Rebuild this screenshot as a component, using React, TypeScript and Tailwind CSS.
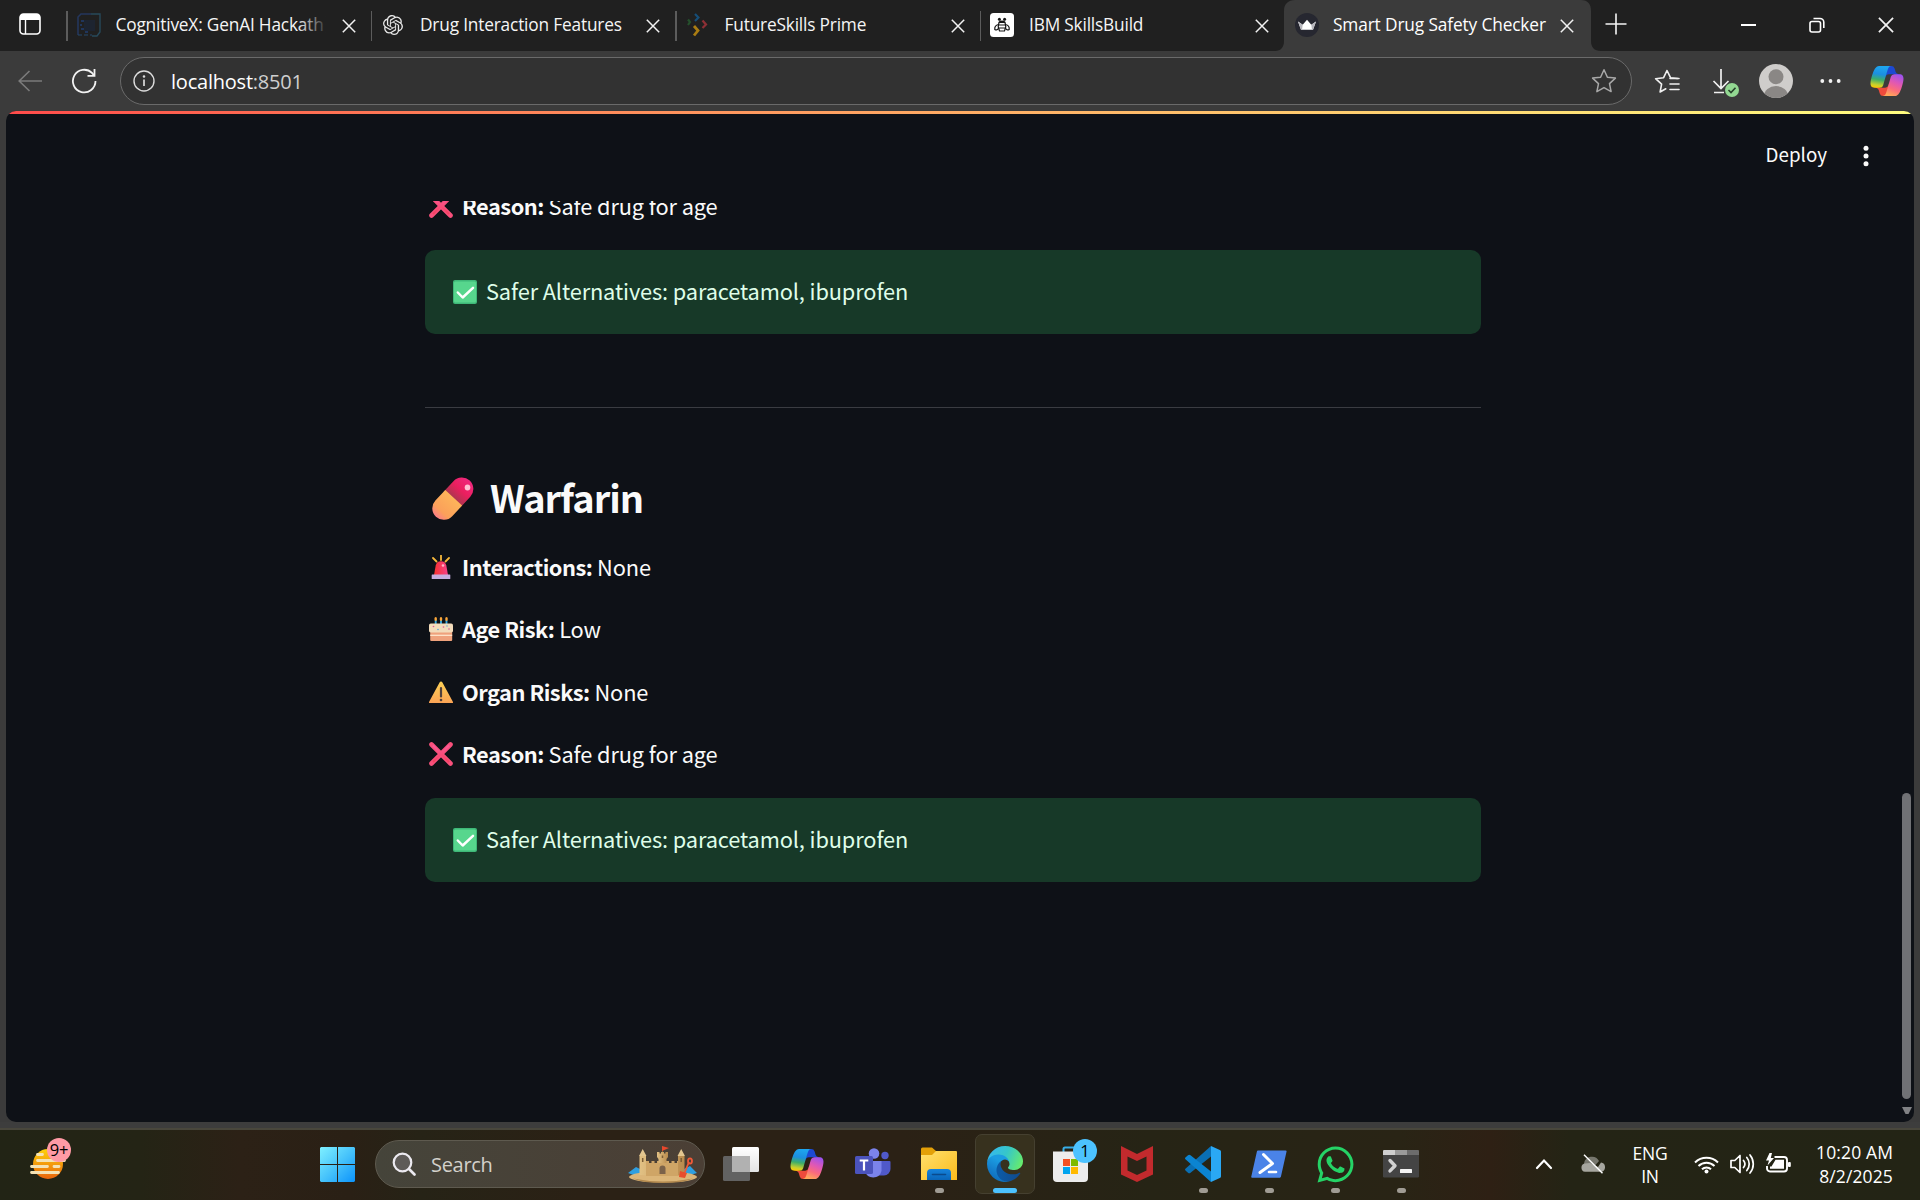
import type { ReactNode } from "react";
import { SiOpenai } from "react-icons/si";
import { FaWhatsapp } from "react-icons/fa";

const UI = "font-['Open_Sans','Noto_Sans',sans-serif]";
const BODY = "font-['Noto_Sans_CJK_SC','Noto_Sans',sans-serif]";

/* ---------- shared glyphs ---------- */

function Cross({ size, className = "" }: { size: number; className?: string }) {
  return (
    <svg width={size} height={size} viewBox="0 0 14 14" className={className} fill="none" stroke="#f2f2f2" strokeWidth="1.5">
      <path d="M.8.8l12.4 12.4M13.2.8L.8 13.2" />
    </svg>
  );
}

function CopilotLogo({ id }: { id: string }) {
  return (
    <svg width="36" height="36" viewBox="0 0 48 48" className="shrink-0">
      <defs>
        <linearGradient id={id + "a"} x1="0.3" y1="0" x2="0.15" y2="1">
          <stop offset="0" stopColor="#1ea5ef" />
          <stop offset=".35" stopColor="#1c8fe0" />
          <stop offset=".6" stopColor="#3cad6a" />
          <stop offset=".85" stopColor="#c9d02c" />
          <stop offset="1" stopColor="#ffc800" />
        </linearGradient>
        <linearGradient id={id + "b"} x1=".8" y1="0" x2=".4" y2="1">
          <stop offset="0" stopColor="#9b52f0" />
          <stop offset=".4" stopColor="#e058b4" />
          <stop offset=".7" stopColor="#fb6c7c" />
          <stop offset="1" stopColor="#ffa65a" />
        </linearGradient>
      </defs>
      <path d="M34.14 7.33A4.63 4.63 0 0 0 29.7 4h-1.35a4.63 4.63 0 0 0-4.56 3.79L21.48 20.4l.57-1.96a4.63 4.63 0 0 1 4.44-3.33h7.86l3.3 1.28 3.17-1.28h-.93a4.63 4.63 0 0 1-4.44-3.33l-1.3-4.45z" fill="#1d49d3" />
      <path d="M14.33 40.66A4.63 4.63 0 0 0 18.78 44h2.87c2.51 0 4.56-2 4.63-4.51l.31-12.16-.65 2.23a4.63 4.63 0 0 1-4.44 3.33h-7.93l-2.82-1.53-3.06 1.53h.91c2.06 0 3.88 1.36 4.45 3.34l1.28 4.43z" fill="#ee4b3c" />
      <path d="M29.5 4H13.46c-4.58 0-7.33 6.06-9.17 12.11C2.12 23.29-.72 32.89 7.5 32.89h6.93a4.65 4.65 0 0 0 4.47-3.36c1.38-4.81 3.79-13.2 5.69-19.6C25.5 6.7 27 4 29.5 4z" fill={`url(#${id}a)`} />
      <path d="M18.5 44h16.04c4.58 0 7.33-6.06 9.17-12.12 2.17-7.18 5.01-16.78-3.21-16.78h-6.93a4.65 4.65 0 0 0-4.47 3.36c-1.38 4.82-3.79 13.21-5.68 19.61C22.5 41.3 21 44 18.5 44z" fill={`url(#${id}b)`} />
    </svg>
  );
}

/* ---------- tab strip ---------- */

function CircuitIcon() {
  return (
    <svg width="24" height="24" viewBox="0 0 24 24" fill="none">
      <path d="M1 22V4l3-3h10" stroke="#24365c" strokeWidth="1.6" />
      <path d="M14 1h9v18l-3 4h-5" stroke="#27495a" strokeWidth="1.4" />
      <path d="M1 22h14" stroke="#24486c" strokeWidth="1.2" strokeDasharray="4 2" />
      <path d="M4 8h3M3 12h2M9 10h2M4 16h3M8 19h3" stroke="#20365c" strokeWidth="1.8" />
      <rect x="7" y="7" width="11" height="11" fill="#1d2430" />
    </svg>
  );
}

function ChevronsIcon() {
  return (
    <svg width="21" height="24" viewBox="0 0 21 24" fill="none" strokeWidth="2.2">
      <path d="M1 6.5l2 2.5-2 3" stroke="#25502c" />
      <path d="M8 1l3.4 3.6L8 8" stroke="#164e78" />
      <path d="M15.5 7.500l3.500 4-3.500 3.500" stroke="#8e2f35" />
      <path d="M7 13l4 4.500-4 5" stroke="#a97c12" strokeWidth="2.800" />
    </svg>
  );
}

function BeeIcon() {
  return (
    <svg width="24" height="24" viewBox="0 0 24 24">
      <rect width="24" height="24" rx="3.500" fill="#fff" />
      <g fill="none" stroke="#161616" strokeWidth="1.200">
        <path d="M9 9.300h6l.8 4.500L14.500 18h-5l-1.300-4.200zM8.500 12h7M8.600 15h7" />
        <path d="M8.500 11.500C6 12 4.500 14 4.800 16.500c1.500 1 3.200.3 3.700-1.500M15.500 11.500c2.500.5 4 2.500 3.700 5-1.500 1-3.200.3-3.700-1.500" />
      </g>
      <circle cx="9.400" cy="6.300" r="1.500" fill="#161616" />
      <circle cx="14.600" cy="6.300" r="1.500" fill="#161616" />
      <rect x="9.200" y="7.600" width="5.600" height="2" fill="#161616" />
    </svg>
  );
}

function CrownIcon() {
  return (
    <svg width="24" height="24" viewBox="0 0 24 24">
      <circle cx="12" cy="12" r="12" fill="#262730" />
      <path d="M3 8.500l4.700 3.200L12 6.800l4.300 4.900L21 8.500l-3 8.300H6z" fill="#fff" />
      <path d="M3 8.500l4.700 3.200L7 16.800H6zM21 8.500l-4.700 3.200.7 5.100h1z" fill="#b6b6bc" />
    </svg>
  );
}

function Tab({ icon, title, fade }: { icon: ReactNode; title: string; fade?: boolean }) {
  return (
    <div className="flex h-[51px] w-[304.5px] shrink-0 items-center">
      <div className="h-[30px] w-[1.500px] shrink-0 bg-[#5c5c5c]" />
      <div className="ml-[9px] flex w-6 shrink-0 justify-center pb-[2px]">{icon}</div>
      <div className="relative ml-[15px] h-6 w-[213px] shrink-0 overflow-hidden pb-[3px] text-[17.300px] leading-[21px] tracking-[-0.18px] whitespace-nowrap text-[#f5f5f5]">
        {title}
        {fade && <div className="absolute inset-y-0 right-0 w-8 bg-linear-to-r from-transparent to-[#202020]" />}
      </div>
      <Cross size={14} className="ml-[13px] mt-px" />
    </div>
  );
}

function TabStrip() {
  return (
    <div className="flex h-[51px] items-center overflow-hidden bg-[#202020]">
      <svg width="22" height="22" viewBox="0 0 22 22" className="-mt-[3px] ml-[19px] mr-[25px] shrink-0" fill="none">
        <rect x="1" y="1" width="20" height="20" rx="3.500" stroke="#fff" strokeWidth="1.600" />
        <path d="M1 4.500a3.500 3.500 0 0 1 3.500-3.500h13A3.500 3.500 0 0 1 21 4.500V7H1z" fill="#fff" />
        <path d="M6.500 6v15" stroke="#fff" strokeWidth="1.400" />
      </svg>
      <Tab icon={<CircuitIcon />} title="CognitiveX: GenAI Hackath" fade />
      <Tab icon={<SiOpenai size={20} color="#e8e8e8" />} title="Drug Interaction Features" />
      <Tab icon={<ChevronsIcon />} title="FutureSkills Prime" />
      <Tab icon={<BeeIcon />} title="IBM SkillsBuild" />
      <svg width="326" height="51" viewBox="0 0 326 51" className="-ml-[9px] -mr-[326px] shrink-0">
        <path d="M0 51c6 0 9-4 9-10V11C9 4 13 0 20 0h286c7 0 10 4 10 11v30c0 6 3 10 10 10z" fill="#3b3b3b" />
      </svg>
      <div className="relative ml-[9px] flex h-[51px] w-[307px] shrink-0 items-center pl-[11px]">
        <div className="pb-[2px]">
          <CrownIcon />
        </div>
        <div className="ml-[14px] w-[216px] pb-[3px] text-[17.300px] leading-[21px] tracking-[-0.13px] whitespace-nowrap text-white">Smart Drug Safety Checker</div>
        <Cross size={14} className="ml-[11px] mt-px" />
      </div>
      <svg width="22" height="22" viewBox="0 0 22 22" className="-mt-[4px] ml-[14px] shrink-0" stroke="#f5f5f5" strokeWidth="1.600">
        <path d="M11 .5v21M.5 11h21" />
      </svg>
      <div className="mr-[26px] ml-auto flex items-center pb-px">
        <div className="h-[2px] w-[15px] bg-white" />
        <svg width="16" height="16" viewBox="0 0 16 16" className="ml-[53px]" fill="none" stroke="#fff" strokeWidth="1.600">
          <rect x="1" y="4.500" width="10.500" height="10.500" rx="2" />
          <path d="M4.500 1.500H11A3.800 3.800 0 0 1 14.800 5.300V11" />
        </svg>
        <Cross size={16} className="ml-[53px]" />
      </div>
    </div>
  );
}

/* ---------- toolbar ---------- */

function Toolbar() {
  return (
    <div className="flex h-[60px] items-center bg-[#3b3b3b]">
      <svg width="24" height="22" viewBox="0 0 24 22" className="ml-[18px] shrink-0" fill="none" stroke="#7b7b7b" strokeWidth="1.600">
        <path d="M24 11H1.200M11.500 1L1.200 11l10.300 10" />
      </svg>
      <svg width="26" height="26" viewBox="0 0 26 26" className="ml-[29px] shrink-0" fill="none" stroke="#f2f2f2" strokeWidth="1.800">
        <path d="M24.500 13A11.300 11.300 0 1 1 21 4.900L23 7.300" />
        <path d="M23.500 1v6.800h-7" />
      </svg>
      <div className="ml-[23px] flex h-12 w-[1512px] shrink-0 items-center rounded-full border-[1.500px] border-[#6a6a6a] bg-[#323232]">
        <svg width="22" height="22" viewBox="0 0 22 22" className="ml-[12px] shrink-0" fill="none" stroke="#dcdcdc" strokeWidth="1.400">
          <circle cx="11" cy="11" r="10" />
          <path d="M11 9.500v6.500" strokeWidth="1.700" />
          <circle cx="11" cy="6.500" r=".6" fill="#dcdcdc" />
        </svg>
        <div className="mt-px ml-[16px] text-[20px] leading-7 tracking-[-0.22px] text-white">
          localhost<span className="text-[#cfcfcf]">:8501</span>
        </div>
        <svg width="26" height="26" viewBox="0 0 26 26" className="ml-auto mr-[14px]" fill="none" stroke="#a8a8a8" strokeWidth="1.500" strokeLinejoin="round">
          <path d="M13 1.800l3.400 7.400 8 .9-5.900 5.500 1.600 8L13 19.600l-7.100 4 1.600-8L1.600 10.100l8-.9z" />
        </svg>
      </div>
      <svg width="27" height="25" viewBox="0 0 27 25" className="ml-[22px] shrink-0" fill="none" stroke="#f0f0f0" strokeWidth="1.600" strokeLinejoin="round" strokeLinecap="round">
        <path d="M23.500 9.500l-7-.8L13 1.500 9.600 8.700l-8 1 6 5.500-1.500 7.800 5.700-3.200" />
        <path d="M16 9.500h9M16 15h9M16 20.500h9" />
      </svg>
      <svg width="28" height="30" viewBox="0 0 28 30" className="ml-[31px] mt-[1px] shrink-0" fill="none" stroke="#f0f0f0" strokeWidth="1.700">
        <path d="M9 2v19M1.500 14L9 21.500 16.500 14M2 25.500h10" />
        <circle cx="20" cy="23" r="7" fill="#93d892" stroke="none" />
        <path d="M16.500 23l2.500 2.500 4.500-4.800" stroke="#26402a" strokeWidth="1.600" />
      </svg>
      <svg width="34" height="34" viewBox="0 0 34 34" className="ml-[19px] shrink-0">
        <clipPath id="avatar">
          <circle cx="17" cy="17" r="17" />
        </clipPath>
        <g clipPath="url(#avatar)">
          <rect width="34" height="34" fill="#cfcdcb" />
          <circle cx="17" cy="12.700" r="7.500" fill="#8a8785" />
          <ellipse cx="17" cy="32" rx="12" ry="10" fill="#8a8785" />
        </g>
      </svg>
      <svg width="21" height="6" viewBox="0 0 21 6" className="ml-[27px] shrink-0" fill="#f2f2f2">
        <circle cx="2.300" cy="3" r="1.900" />
        <circle cx="10.500" cy="3" r="1.900" />
        <circle cx="18.700" cy="3" r="1.900" />
      </svg>
      <div className="ml-[28px]">
        <CopilotLogo id="top" />
      </div>
    </div>
  );
}

/* ---------- page content ---------- */

function CrossEmoji() {
  return (
    <svg width="24" height="24" viewBox="0 0 24 24">
      <defs>
        <linearGradient id="cross" x1="0" y1="0" x2="0" y2="1">
          <stop offset="0" stopColor="#fb5a9a" />
          <stop offset="1" stopColor="#f5405e" />
        </linearGradient>
      </defs>
      <path d="M2.500 2.500L12 12l9.500-9.500M2.500 21.500L12 12l9.500 9.500" fill="none" stroke="#f9507c" strokeWidth="4.600" strokeLinecap="round" />
      <path d="M4 3.500l16 16.500M20 3.500L4 20" stroke="url(#cross)" strokeWidth="2" />
    </svg>
  );
}

function CheckEmoji() {
  return (
    <svg width="24" height="24" viewBox="0 0 24 24">
      <rect width="24" height="24" rx="2" fill="#3fb878" />
      <rect x="1" y="1.500" width="22" height="21" rx="1.500" fill="#57d68d" />
      <path d="M4.800 12.500l4.900 5L20 7.800" fill="none" stroke="#fff" strokeWidth="2.500" strokeLinecap="round" strokeLinejoin="round" />
    </svg>
  );
}

function SirenEmoji() {
  return (
    <svg width="24" height="24" viewBox="0 0 24 24">
      <defs>
        <linearGradient id="siren">
          <stop offset="0" stopColor="#f8312f" />
          <stop offset="1" stopColor="#f5418a" />
        </linearGradient>
      </defs>
      <path d="M12 .5v4.500M4 3l3.500 3.500M20 3l-3.500 3.500" stroke="#f6b83c" strokeWidth="1.800" strokeLinecap="round" />
      <path d="M5 20l1.700-9.500a5.400 5.400 0 0 1 10.600 0L19 20z" fill="url(#siren)" />
      <circle cx="14" cy="10.500" r="1.300" fill="#ffb6c6" />
      <rect x="2.700" y="19.500" width="18.600" height="4.500" rx=".6" fill="#c5aee0" />
    </svg>
  );
}

function CakeEmoji() {
  return (
    <svg width="24" height="24" viewBox="0 0 24 24">
      <path d="M6.700 3v5M12 3v5M17.500 3v5" stroke="#3aa9e0" strokeWidth="1.900" />
      <g fill="#f9a63a">
        <ellipse cx="6.700" cy="2" rx="1.300" ry="2" />
        <ellipse cx="12" cy="2" rx="1.300" ry="2" />
        <ellipse cx="17.500" cy="2" rx="1.300" ry="2" />
      </g>
      <rect x="1.200" y="12" width="22" height="12" rx="1" fill="#efa27c" />
      <rect y="6.500" width="24" height="9" rx="1.800" fill="#f3dcbb" />
      <path d="M1.200 18.300h22" stroke="#ffe9d0" strokeWidth="1.200" />
      <g fill="#e0579a">
        <circle cx="4.500" cy="9.500" r=".8" />
        <circle cx="14.500" cy="10" r=".8" />
        <circle cx="20" cy="12" r=".8" />
      </g>
      <g fill="#5aa6dd">
        <circle cx="9" cy="12.500" r=".8" />
        <circle cx="18" cy="9" r=".7" />
      </g>
    </svg>
  );
}

function WarningEmoji() {
  return (
    <svg width="24" height="24" viewBox="0 0 24 24">
      <defs>
        <linearGradient id="warn" x1="0" y1="0" x2="0" y2="1">
          <stop offset="0" stopColor="#fcd155" />
          <stop offset="1" stopColor="#fba355" />
        </linearGradient>
      </defs>
      <path d="M10.700 2.200a1.500 1.500 0 0 1 2.600 0L24 22a.8.800 0 0 1-.8 1H.8A.8.800 0 0 1 0 22z" fill="url(#warn)" />
      <path d="M12 8v8.500" stroke="#50403c" strokeWidth="2.200" strokeLinecap="round" />
      <circle cx="12" cy="20" r="1.300" fill="#50403c" />
    </svg>
  );
}

function PillEmoji() {
  return (
    <svg width="42" height="43" viewBox="0 0 42 43" className="shrink-0">
      <defs>
        <linearGradient id="pillTop" x1="0" y1="0" x2="1" y2="0">
          <stop offset="0" stopColor="#a03a4c" />
          <stop offset=".5" stopColor="#ea1f5e" />
          <stop offset="1" stopColor="#f0287e" />
        </linearGradient>
        <linearGradient id="pillBottom" x1="1" y1="0" x2="0" y2="0">
          <stop offset="0" stopColor="#fdb45a" />
          <stop offset=".7" stopColor="#fba05a" />
          <stop offset="1" stopColor="#fb7f86" />
        </linearGradient>
      </defs>
      <g transform="rotate(-47 21 21.500)">
        <path d="M21 10h14.500a11.500 11.500 0 0 1 0 23H21z" fill="url(#pillTop)" transform="translate(-1.500 0)" />
        <path d="M21 10H6.500a11.500 11.500 0 0 0 0 23H21z" fill="url(#pillBottom)" transform="translate(1 0)" />
      </g>
      <ellipse cx="35.500" cy="10.500" rx="2.800" ry="3" fill="#ffc2d4" />
    </svg>
  );
}

function Fact({ icon, label, value }: { icon: ReactNode; label: string; value: string }) {
  return (
    <div className="flex h-[38.500px] items-center">
      <div className="ml-1 mt-[2px] w-[33px] shrink-0">{icon}</div>
      <p className="pt-[2px] text-[21.800px] leading-[36px] tracking-[-0.13px] whitespace-nowrap text-[#fafafa]">
        <strong className="font-bold tracking-[-0.5px]">{label}</strong> {value}
      </p>
    </div>
  );
}

function Alternatives() {
  return (
    <div className="flex h-[84px] items-center rounded-[10px] bg-[#173928] pl-7">
      <div className="pb-px">
        <CheckEmoji />
      </div>
      <p className="ml-[9px] pb-[2px] text-[21.800px] leading-[36px] tracking-[-0.13px] text-[#dffde9]">Safer Alternatives: paracetamol, ibuprofen</p>
    </div>
  );
}

function Page() {
  return (
    <div className={`mx-[6px] flex h-[1011px] flex-col overflow-hidden rounded-[10px] bg-[#0e1117] ${BODY}`}>
      <div className="h-[3px] shrink-0 bg-linear-to-r from-[#ff4b4b] to-[#fffd80]" />
      <div className="flex h-[87px] shrink-0 items-center justify-end pr-[45px] pb-[5px]">
        <div className="pb-[2px] text-[18.800px] leading-7 text-[#fafafa]">Deploy</div>
        <svg width="6" height="22" viewBox="0 0 6 22" className="ml-[36px] mt-[1px]" fill="#fafafa">
          <circle cx="3" cy="3.300" r="2.500" />
          <circle cx="3" cy="11" r="2.500" />
          <circle cx="3" cy="18.700" r="2.500" />
        </svg>
      </div>
      <div className="flex min-h-0 flex-1 overflow-hidden">
        <div className="-mt-[15px] ml-[419px] w-[1056px] shrink-0">
          <Fact icon={<CrossEmoji />} label="Reason:" value="Safe drug for age" />
          <div className="mt-[25.500px]">
            <Alternatives />
          </div>
          <div className="mt-[73px] h-px bg-[#3a3c42]" />
          <div className="mt-[64px] flex h-[52px] items-center pl-[7px]">
            <PillEmoji />
            <h2 className="ml-[16px] pb-[2px] text-[38px] leading-[50px] font-bold tracking-[-1.050px] text-[#fafafa]">Warfarin</h2>
          </div>
          <div className="mt-[22.500px] flex flex-col gap-[24px]">
            <Fact icon={<SirenEmoji />} label="Interactions:" value="None" />
            <Fact icon={<CakeEmoji />} label="Age Risk:" value="Low" />
            <Fact icon={<WarningEmoji />} label="Organ Risks:" value="None" />
            <Fact icon={<CrossEmoji />} label="Reason:" value="Safe drug for age" />
          </div>
          <div className="mt-[25.500px]">
            <Alternatives />
          </div>
        </div>
        <div className="ml-auto mr-[3px] flex w-[9px] flex-col items-center justify-end pb-[8px]">
          <div className="h-[306px] w-[9px] rounded-full bg-[#707175]" />
          <svg width="10" height="7" viewBox="0 0 10 7" className="mt-[8px]" fill="#808184">
            <path d="M0 0h10L6.500 7h-3z" />
          </svg>
        </div>
      </div>
    </div>
  );
}

/* ---------- taskbar ---------- */

function WeatherIcon() {
  return (
    <div className="relative ml-[30px] h-9 w-[42px]">
      <svg width="42" height="36" viewBox="0 0 42 36">
        <defs>
          <linearGradient id="sun" x1="0" y1="0" x2="0" y2="1">
            <stop offset="0" stopColor="#ffd20a" />
            <stop offset="1" stopColor="#e8640c" />
          </linearGradient>
        </defs>
        <circle cx="18" cy="17" r="15" fill="url(#sun)" />
        <g stroke="#f4e2b4" strokeWidth="2.800" strokeLinecap="round">
          <path d="M7.500 7.500h5M7.500 13.500h27M1.500 19.500h16M24 19.500h5M1.500 25.500h27" />
        </g>
      </svg>
      <div className="absolute -top-[9px] left-[17px] flex size-6 items-center justify-center rounded-full bg-[#ff9aa5] text-[16.500px] tracking-[-0.3px] text-black">9+</div>
    </div>
  );
}

function WindowsIcon() {
  return (
    <svg width="35" height="35" viewBox="0 0 35 35" className="-mt-px shrink-0">
      <defs>
        <linearGradient id="win" gradientUnits="userSpaceOnUse" x1="0" y1="0" x2="35" y2="35">
          <stop offset="0" stopColor="#7ff0ff" />
          <stop offset=".5" stopColor="#48c4fb" />
          <stop offset="1" stopColor="#0c93fb" />
        </linearGradient>
      </defs>
      <path d="M1 0h16v17H0V1zM18 0h16l1 1v16H18zM0 18h17v17H1l-1-1zM18 18h17v16l-1 1H18z" fill="url(#win)" />
    </svg>
  );
}

function Castle() {
  return (
    <svg width="70" height="37" viewBox="0 0 70 37" className="shrink-0">
      <defs>
        <linearGradient id="sand">
          <stop offset="0" stopColor="#e2c184" />
          <stop offset="1" stopColor="#b98b4d" />
        </linearGradient>
      </defs>
      <path d="M0 27l8-6 8 4 40-2 6-3 7 7-10 3H8z" fill="#2f9fe0" />
      <ellipse cx="35" cy="31" rx="34" ry="5.500" fill="#dcb679" />
      <path d="M5 32.500q30 6 60 0-10 4.500-30 4.500T5 32.500z" fill="#b3894e" />
      <path d="M18 15h3v2h2.500v-2h3v2H29v-2h3v2h6v-2h3v2h2.500v-2h3v2H49v-2h3v15H18z" fill="#cfa566" />
      <path d="M11.500 10h6.500v19h-6.500zM50 10h6.500v19H50z" fill="url(#sand)" />
      <path d="M11 10l3.700-7L18.500 10zM49.500 10l3.700-7L57 10z" fill="#e3c68f" />
      <path d="M29 6h2.500v1.500H33V6h3v1.500h1.500V6H40v5l-1.500 2v4h-8v-4L29 11z" fill="url(#sand)" />
      <path d="M34.500 6V.5" stroke="#8d6b3a" />
      <path d="M34 0l7 2-7 3z" fill="#e8472c" />
      <path d="M31.500 28v-5.500a3 3 0 0 1 6 0V28z" fill="#7b6249" />
      <path d="M14.700 12v4M53.200 12v4M34.500 9.500v2.500" stroke="#7b5d36" strokeWidth="1.500" />
      <path d="M61 16l-5 12" stroke="#ef5a38" strokeWidth="1.800" />
      <ellipse cx="62" cy="15" rx="2" ry="2.700" fill="none" stroke="#ef5a38" strokeWidth="1.800" />
      <path d="M52 25l7 2-2 5-6-1z" fill="#e84d2d" />
    </svg>
  );
}

function SearchBox() {
  return (
    <div className="-mt-[2px] ml-[20px] flex h-12 w-[330px] shrink-0 items-center rounded-full border border-[#5e5a4f] bg-linear-to-r from-[#45443a] to-[#4b3f35]">
      <svg width="24" height="24" viewBox="0 0 24 24" className="ml-[16px]" fill="none" stroke="#eceaf0" strokeLinecap="round">
        <circle cx="10.500" cy="10.500" r="8.800" strokeWidth="2.200" fill="#5e5b58" />
        <path d="M17 17l5.500 5.500" strokeWidth="2.600" />
      </svg>
      <div className="mt-px ml-[15px] text-[20px] leading-7 tracking-[-0.3px] text-[#d3d1cb]">Search</div>
      <div className="ml-auto mr-[6px]">
        <Castle />
      </div>
    </div>
  );
}

function TaskViewIcon() {
  return (
    <svg width="36" height="34" viewBox="0 0 36 34">
      <defs>
        <linearGradient id="tv" x1="0" y1="0" x2="0" y2="1">
          <stop offset="0" stopColor="#fff" />
          <stop offset="1" stopColor="#e4e4e4" />
        </linearGradient>
      </defs>
      <rect y="9" width="27" height="25" rx="1.500" fill="#626262" />
      <rect x="9" width="27" height="25" rx="1.500" fill="url(#tv)" />
      <path d="M9 9h18v16H10.500A1.500 1.500 0 0 1 9 23.500z" fill="#b1b1b1" />
    </svg>
  );
}

function TeamsIcon() {
  return (
    <svg width="36" height="34" viewBox="0 0 36 34">
      <circle cx="30" cy="8.500" r="3.700" fill="#5059c9" />
      <path d="M24 14h10.500a1 1 0 0 1 1 1v7a6.500 6.500 0 0 1-6.500 6.500H24z" fill="#5059c9" />
      <circle cx="19" cy="6.500" r="5.300" fill="#7b83eb" />
      <path d="M10 14h16.500v10a8.500 8.500 0 0 1-16.500 0z" fill="#7b83eb" />
      <rect y="9" width="18" height="18" rx="1.600" fill="#4b53bc" />
      <path d="M4.700 13.500h8.600M9 13.500v10" stroke="#fff" strokeWidth="2.200" />
    </svg>
  );
}

function ExplorerIcon() {
  return (
    <svg width="36" height="34" viewBox="0 0 36 34">
      <defs>
        <linearGradient id="fold" x1="0" y1="0" x2="1" y2="1">
          <stop offset="0" stopColor="#ffe06e" />
          <stop offset="1" stopColor="#fcbb1b" />
        </linearGradient>
        <linearGradient id="tray" x1="0" y1="0" x2="0" y2="1">
          <stop offset="0" stopColor="#1683dc" />
          <stop offset="1" stopColor="#0a65b8" />
        </linearGradient>
      </defs>
      <path d="M0 2a1.500 1.500 0 0 1 1.500-1.500h9.500L15 4v6H0z" fill="#e3a008" />
      <path d="M0 8h11l4-4h20a1 1 0 0 1 1 1v28H0z" fill="url(#fold)" />
      <path d="M6 33v-7a4 4 0 0 1 4-4h16a4 4 0 0 1 4 4v7z" fill="url(#tray)" />
      <path d="M11.500 27.500h13" stroke="#0a4a8c" strokeWidth="1.600" strokeLinecap="round" />
    </svg>
  );
}

function EdgeIcon() {
  return (
    <svg width="36" height="36" viewBox="0 0 256 256">
      <defs>
        <linearGradient id="edgeA" x1=".2" y1=".5" x2="1" y2=".5">
          <stop offset="0" stopColor="#0c59a4" />
          <stop offset="1" stopColor="#114a8b" />
        </linearGradient>
        <linearGradient id="edgeB" x1=".6" y1=".3" x2=".3" y2="1">
          <stop offset="0" stopColor="#1b9de2" />
          <stop offset=".5" stopColor="#1580cd" />
          <stop offset="1" stopColor="#0d6ab8" />
        </linearGradient>
        <linearGradient id="edgeC" x1="0" y1=".3" x2="1" y2=".6">
          <stop offset="0" stopColor="#35b8f1" />
          <stop offset=".5" stopColor="#36c6c9" />
          <stop offset="1" stopColor="#66eb6e" />
        </linearGradient>
      </defs>
      <path d="M231.070 190.540a79.200 79.200 0 0 1-10.540 4.710 101.850 101.850 0 0 1-35.900 6.460c-47.320 0-88.540-32.550-88.540-74.320A31.480 31.480 0 0 1 112.500 99.800c-42.800 1.800-53.800 46.400-53.800 72.530 0 73.880 68.090 81.370 82.760 81.370 7.910 0 19.840-2.300 27-4.560l1.310-.44a128.340 128.340 0 0 0 66.600-52.800 4 4 0 0 0-5.300-5.360z" fill="url(#edgeA)" />
      <path d="M105.730 241.420a79.200 79.200 0 0 1-22.740-21.340 80.720 80.720 0 0 1 29.530-120.220c3.120-1.470 8.450-4.130 15.540-4a32.350 32.350 0 0 1 25.690 13 31.880 31.880 0 0 1 6.360 18.660c0-.21 24.460-79.600-80-79.600-43.900 0-80 41.660-80 78.210a130.150 130.150 0 0 0 12.110 56 128 128 0 0 0 156.380 67.110 75.550 75.550 0 0 1-62.780-8z" fill="url(#edgeB)" />
      <path d="M152.330 148.860c-.81 1.050-3.300 2.500-3.300 5.660 0 2.610 1.700 5.120 4.720 7.230 14.380 10 41.490 8.680 41.560 8.680a59.560 59.560 0 0 0 30.270-8.350 61.380 61.380 0 0 0 30.430-52.880c.26-22.410-8-37.310-11.340-43.910C223.460 23.840 177.720 0 128 0A128 128 0 0 0 0 126.200c.48-36.540 36.800-66.050 80-66.050 3.500 0 23.460.34 42 10.070 16.340 8.580 24.900 18.940 30.850 29.210 6.180 10.670 7.280 24.150 7.280 29.520s-2.740 13.330-7.800 19.910z" fill="url(#edgeC)" />
    </svg>
  );
}

function StoreIcon() {
  return (
    <div className="relative h-9 w-[36px]">
      <svg width="36" height="36" viewBox="0 0 36 36">
        <path d="M10.500 7V3a1.500 1.500 0 0 1 1.500-1.500h11A1.500 1.500 0 0 1 24.500 3v4" fill="none" stroke="#38aee8" strokeWidth="2" />
        <path d="M0 5.500h35V32a4 4 0 0 1-4 4H4a4 4 0 0 1-4-4z" fill="#ececec" />
        <rect x="10" y="13" width="7" height="7" fill="#f25022" />
        <rect x="18" y="13" width="7" height="7" fill="#7fba00" />
        <rect x="10" y="21" width="7" height="7" fill="#00a4ef" />
        <rect x="18" y="21" width="7" height="7" fill="#ffb900" />
      </svg>
      <div className="absolute -top-[7px] left-[20px] flex size-6 items-center justify-center rounded-full bg-[#4cc2ff] text-[16.500px] text-black">1</div>
    </div>
  );
}

function ShieldIcon() {
  return (
    <svg width="32" height="36" viewBox="0 0 32 36">
      <path d="M0 0l16 8L32 0v28.500L16 36 0 28.500z" fill="#c22a2d" />
      <path d="M6.500 10.500L16 15l9.500-4.500V24.500L16 29l-9.500-4.500z" fill="#2b2417" />
    </svg>
  );
}

function CodeIcon() {
  return (
    <svg width="36" height="36" viewBox="0 0 36 36">
      <path d="M26 0v10.500L5.500 26.700a2 2 0 0 1-2.500 0L.7 24.700a1.500 1.500 0 0 1 0-2.300z" fill="#0a6fb4" />
      <path d="M26 36V25.500L5.500 9.300a2 2 0 0 0-2.500 0L.7 11.300a1.500 1.500 0 0 0 0 2.300z" fill="#0b84d2" />
      <path d="M26 0l8.800 4a2 2 0 0 1 1.200 2v24a2 2 0 0 1-1.200 2L26 36z" fill="#2aa8f4" />
    </svg>
  );
}

function PowerShellIcon() {
  return (
    <svg width="36" height="28" viewBox="0 0 36 28">
      <path d="M7 .5h27.500a1 1 0 0 1 1 1.300l-5.600 25a1.200 1.200 0 0 1-1 .9H1.300a1 1 0 0 1-1-1.300l5.600-25A1.200 1.200 0 0 1 7 .5z" fill="#4a83e8" />
      <path d="M12.500 4.500l9 9L9 22.500" fill="none" stroke="#fff" strokeWidth="3" strokeLinecap="round" strokeLinejoin="round" />
      <path d="M18 22h7" stroke="#fff" strokeWidth="2.600" strokeLinecap="round" />
    </svg>
  );
}

function TerminalIcon() {
  return (
    <svg width="36" height="28" viewBox="0 0 36 28">
      <rect width="36" height="27.500" rx="1.200" fill="#444" />
      <path d="M0 1.200A1.200 1.200 0 0 1 1.200 0H12v5H0z" fill="#cfcfcf" />
      <path d="M12 0h12v5H12z" fill="#9b9b9b" />
      <path d="M24 0h10.800A1.200 1.200 0 0 1 36 1.200V5H24z" fill="#6c6c6c" />
      <path d="M7 10.500l5 5.200-5 5.200" fill="none" stroke="#d2d2d2" strokeWidth="3.400" strokeLinecap="round" strokeLinejoin="round" />
      <rect x="17" y="19" width="12" height="4" rx=".6" fill="#f4f4f4" />
    </svg>
  );
}

function TaskItem({ children, running, active }: { children: ReactNode; running?: boolean; active?: boolean }) {
  return (
    <div className="flex h-[70px] w-[66px] shrink-0 items-start justify-center pt-[4px]">
      <div className={active ? "flex size-[60px] flex-col items-center rounded-[7px] border border-[#454030] bg-[#38331f]/90" : "flex size-[60px] flex-col items-center border border-transparent"}>
        <div className="mt-[11px] flex h-9 items-center">{children}</div>
        {running && <div className="mt-[6px] h-[5px] w-[9px] rounded-full bg-[#a09c94]" />}
        {active && <div className="mt-[6px] h-[5px] w-6 shrink-0 rounded-full bg-[#4cc2ff]" />}
      </div>
    </div>
  );
}

function Tray() {
  return (
    <div className="ml-auto flex h-[70px] items-center pr-[27px] pb-[2px] text-white">
      <svg width="18" height="12" viewBox="0 0 18 12" fill="none" stroke="#fff" strokeWidth="2.200" strokeLinecap="round">
        <path d="M2 10l7-7.500L16 10" />
      </svg>
      <svg width="25" height="20" viewBox="0 0 25 20" className="ml-[27px]">
        <path d="M4 9.500A8 8 0 0 1 19 7l-8 9H5a4.500 4.500 0 0 1-1-6.500z" fill="#77776e" />
        <path d="M5 9.500l5-.5 8 4 3-4.500a4.700 4.700 0 0 1 0 9.300H5a4.200 4.200 0 0 1 0-8.300z" fill="#a6a69f" />
        <path d="M4 .8l18.500 18.500" stroke="#fff" strokeWidth="1.500" />
      </svg>
      <div className="ml-[23px] w-[44px] pt-px text-center text-[17.500px] leading-[23px] tracking-[-0.2px]">
        <div>ENG</div>
        <div>IN</div>
      </div>
      <svg width="25" height="19" viewBox="0 0 25 19" className="ml-[22px]" fill="none" stroke="#fff" strokeWidth="2">
        <path d="M1 7.500a16.500 16.500 0 0 1 23 0M4.500 11a11.500 11.500 0 0 1 16 0M8 14.300a6.500 6.500 0 0 1 9 0" />
        <circle cx="12.500" cy="16.500" r="2" fill="#fff" stroke="none" />
      </svg>
      <svg width="25" height="22" viewBox="0 0 25 22" className="ml-[11px]" fill="none" stroke="#fff" strokeWidth="1.700" strokeLinejoin="round" strokeLinecap="round">
        <path d="M1 7.500h3.800L10 2.500v17L4.800 14.500H1z" />
        <path d="M13.500 7.500a5.500 5.500 0 0 1 0 7M16.800 4.500a10 10 0 0 1 0 13M20 2a14 14 0 0 1 0 18" />
      </svg>
      <svg width="25" height="20" viewBox="0 0 25 20" className="ml-[11px] -mt-[3px]" fill="none">
        <path d="M8.500 4H18a3 3 0 0 1 3 3v8.500a3 3 0 0 1-3 3H4a3 3 0 0 1-3-3V13" stroke="#fff" strokeWidth="1.900" />
        <path d="M9.500 6.800H18v9H4V13.500h1.500z" fill="#fff" />
        <rect x="22" y="9" width="2.800" height="5" rx="1" fill="#fff" />
        <path d="M3.500 0L0 7.500h3l-1.500 5L8 5H4.800L6 0z" fill="#fff" />
      </svg>
      <div className="ml-[19px] w-[83px] pb-px text-right text-[17.500px] leading-[24px] tracking-[0.12px] whitespace-nowrap">
        <div>10:20 AM</div>
        <div>8/2/2025</div>
      </div>
    </div>
  );
}

function Taskbar() {
  return (
    <div className="flex h-[70px] items-center bg-[linear-gradient(90deg,#222415_0,#242415_140px,#2c2116_240px,#2a2015_350px,#262316_420px,#2b2115_580px,#2b2115_900px,#262415_1150px,#292415_1400px,#2e2014_1490px,#242415_1570px,#232415_100%)]">
      <div className="w-[320px] shrink-0">
        <WeatherIcon />
      </div>
      <WindowsIcon />
      <SearchBox />
      <div className="ml-[3px] flex">
        <TaskItem><TaskViewIcon /></TaskItem>
        <TaskItem><CopilotLogo id="bar" /></TaskItem>
        <TaskItem><TeamsIcon /></TaskItem>
        <TaskItem running><ExplorerIcon /></TaskItem>
        <TaskItem active><EdgeIcon /></TaskItem>
        <TaskItem><StoreIcon /></TaskItem>
        <TaskItem><ShieldIcon /></TaskItem>
        <TaskItem running><CodeIcon /></TaskItem>
        <TaskItem running><PowerShellIcon /></TaskItem>
        <TaskItem running><FaWhatsapp size={41} color="#25d366" className="-m-[3px]" /></TaskItem>
        <TaskItem running><TerminalIcon /></TaskItem>
      </div>
      <Tray />
    </div>
  );
}

export default function App() {
  return (
    <div className={`flex h-[1200px] w-[1920px] flex-col overflow-hidden bg-[#3b3b3b] ${UI}`}>
      <TabStrip />
      <Toolbar />
      <Page />
      <div className="h-[6px] bg-[#3d3d3d]" />
      <div className="h-[2px] bg-[#49473c]" />
      <Taskbar />
    </div>
  );
}
